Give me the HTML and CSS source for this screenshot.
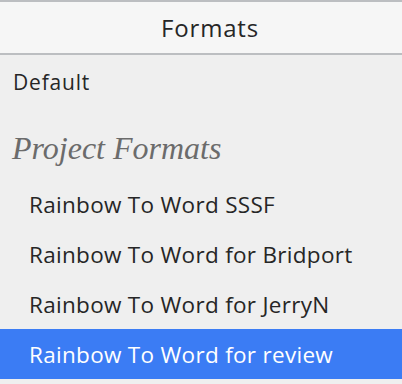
FILE: index.html
```html
<!DOCTYPE html>
<html lang="en">
<head>
  <meta charset="UTF-8" />
  <title>Formats</title>
  <link rel="stylesheet" href="styles.css">
</head>
<body>

<div class="panel">
  <div class="header">Formats</div>

  <div class="row default">Default</div>

  <div class="group-title">Project Formats</div>

  <div class="row">Rainbow To Word SSSF</div>
  <div class="row">Rainbow To Word for Bridport</div>
  <div class="row">Rainbow To Word for JerryN</div>
  <div class="row selected">Rainbow To Word for review</div>
</div>

</body>
</html>
```

FILE: styles.css
```css
html, body {
  margin: 0;
  padding: 0;
  background-color: #efefef;
}

body {
  font-family: 'Open Sans', Lato, sans-serif;
  color: #262626;
}

.panel {
  border-top: 2px solid #bcbec1;
  display: flex;
  flex-direction: column;
}

.header {
  height: 51px;
  padding-left: 18px;
  background: #f6f6f6;
  border-bottom: 2px solid #bcbec1;
  display: flex;
  align-items: center;
  justify-content: center;
  font-size: 24px;
  letter-spacing: 0.8px;
}

.row {
  height: 50px;
  display: flex;
  align-items: center;
  padding-left: 29px;
  font-size: 22.5px;
  letter-spacing: 0.3px;
}

.row.default {
  padding-left: 13px;
  font-size: 21px;
  letter-spacing: 0.8px;
  height: 54px;
}

.group-title {
  height: 70px;
  display: flex;
  align-items: center;
  padding-left: 12px;
  padding-top: 8px;
  box-sizing: border-box;
  font-family: 'Liberation Serif', serif;
  font-style: italic;
  font-size: 32px;
  color: #6b6b6b;
}

.row.selected {
  background-color: #3b7cf4;
  color: white;
}
```
